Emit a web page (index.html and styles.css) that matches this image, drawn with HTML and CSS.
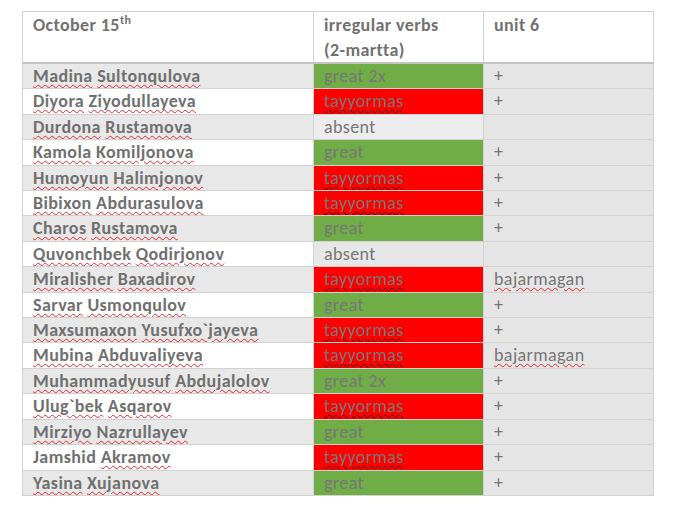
FILE: index.html
```html
<!DOCTYPE html>
<html>
<head>
<meta charset="utf-8">
<link rel="stylesheet" href="styles.css">
</head>
<body>
<div class="page">
<table class="grid">
  <colgroup><col class="c1"><col class="c2"><col class="c3"></colgroup>
  <thead>
    <tr class="head">
      <th>October 15<sup>th</sup></th>
      <th>irregular verbs<br>(2-martta)</th>
      <th>unit 6</th>
    </tr>
  </thead>
  <tbody>
    <tr class="odd"><td class="name"><span class="sp">Madina</span> <span class="sp">Sultonqulova</span></td><td class="g">great 2x</td><td class="u">+</td></tr>
    <tr><td class="name"><span class="sp">Diyora</span> <span class="sp">Ziyodullayeva</span></td><td class="r"><span class="spd">tayyormas</span></td><td class="u">+</td></tr>
    <tr class="odd"><td class="name"><span class="sp">Durdona</span> <span class="sp">Rustamova</span></td><td class="a1">absent</td><td class="u"></td></tr>
    <tr><td class="name"><span class="sp">Kamola</span> <span class="sp">Komiljonova</span></td><td class="g">great</td><td class="u">+</td></tr>
    <tr class="odd"><td class="name"><span class="sp">Humoyun</span> <span class="sp">Halimjonov</span></td><td class="r"><span class="spd">tayyormas</span></td><td class="u">+</td></tr>
    <tr><td class="name"><span class="sp">Bibixon</span> <span class="sp">Abdurasulova</span></td><td class="r"><span class="spd">tayyormas</span></td><td class="u">+</td></tr>
    <tr class="odd"><td class="name"><span class="sp">Charos</span> <span class="sp">Rustamova</span></td><td class="g">great</td><td class="u">+</td></tr>
    <tr><td class="name"><span class="sp">Quvonchbek</span> <span class="sp">Qodirjonov</span></td><td class="a2">absent</td><td class="u"></td></tr>
    <tr class="odd"><td class="name"><span class="sp">Miralisher</span> <span class="sp">Baxadirov</span></td><td class="r"><span class="spd">tayyormas</span></td><td class="u"><span class="sp">bajarmagan</span></td></tr>
    <tr><td class="name"><span class="sp">Sarvar</span> <span class="sp">Usmonqulov</span></td><td class="g">great</td><td class="u">+</td></tr>
    <tr class="odd"><td class="name"><span class="sp">Maxsumaxon</span> <span class="sp">Yusufxo`jayeva</span></td><td class="r"><span class="spd">tayyormas</span></td><td class="u">+</td></tr>
    <tr><td class="name"><span class="sp">Mubina</span> <span class="sp">Abduvaliyeva</span></td><td class="r"><span class="spd">tayyormas</span></td><td class="u"><span class="sp">bajarmagan</span></td></tr>
    <tr class="odd"><td class="name"><span class="sp">Muhammadyusuf</span> <span class="sp">Abdujalolov</span></td><td class="g">great 2x</td><td class="u">+</td></tr>
    <tr><td class="name"><span class="sp">Ulug`bek</span> <span class="sp">Asqarov</span></td><td class="r"><span class="spd">tayyormas</span></td><td class="u">+</td></tr>
    <tr class="odd"><td class="name"><span class="sp">Mirziyo</span> <span class="sp">Nazrullayev</span></td><td class="g">great</td><td class="u">+</td></tr>
    <tr><td class="name">Jamshid <span class="sp">Akramov</span></td><td class="r"><span class="spd">tayyormas</span></td><td class="u">+</td></tr>
    <tr class="odd"><td class="name"><span class="sp">Yasina</span> <span class="sp">Xujanova</span></td><td class="g">great</td><td class="u">+</td></tr>
  </tbody>
</table>
</div>
</body>
</html>
```
FILE: styles.css
```css
html, body {
  margin: 0;
  padding: 0;
  background: #ffffff;
}
.page {
  padding: 11px 0 0 22px;
}
.grid {
  border-collapse: collapse;
  font-family: Carlito, "Open Sans", sans-serif;
  font-size: 18px;
  letter-spacing: 0.4px;
  color: #767676;
  table-layout: fixed;
  width: 631px;
}
.c1 { width: 291px; }
.c2 { width: 170px; }
.c3 { width: 170px; }
.grid th, .grid td {
  border: 1px solid #d2d2d2;
  padding: 0 10px;
  text-align: left;
  vertical-align: top;
  white-space: nowrap;
  overflow: hidden;
}
.grid td {
  height: 24.4px;
  line-height: 24.4px;
}
.head th {
  font-weight: bold;
  line-height: 24.5px;
  height: 47px;
  padding-top: 1px;
  border-bottom: 2px solid #c3c3c3;
  background: #fff;
  color: #717171;
}
.head sup {
  font-size: 12px;
  line-height: 0;
  vertical-align: 7px;
}
.name {
  font-weight: bold;
  color: #707070;
  background: #ffffff;
}
.odd .name { background: #e8e8e8; }
.u { background: #e5e5e5; }
.g { background: #70ad47; }
.r { background: #ff0000; }
.a1 { background: #ededed; }
.a2 { background: #e7e7e7; }
.sp {
  text-decoration: underline wavy #e8262a;
  text-decoration-thickness: 1px;
  text-underline-offset: 2px;
}
.spd {
  text-decoration: underline wavy #3a0000;
  text-decoration-thickness: 1px;
  text-underline-offset: 2px;
}
```
